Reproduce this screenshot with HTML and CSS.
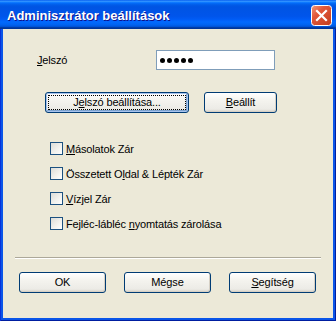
FILE: index.html
```html
<!doctype html>
<html>
<head>
	<title>Adminisztrátor beállítások</title>
	<meta charset="utf-8">
	<link rel="stylesheet" href="styles.css">
</head>

<body>
	<div class="window">
		<div class="titlebar">
			<span class="title">Adminisztrátor beállítások</span>
			<span class="close">
				<svg width="21" height="21" viewBox="0 0 21 21">
					<defs>
						<linearGradient id="cg" x1="0" y1="0" x2="1" y2="1">
							<stop offset="0" stop-color="#F09A7E"/>
							<stop offset="0.35" stop-color="#E2583A"/>
							<stop offset="1" stop-color="#C23D1E"/>
						</linearGradient>
					</defs>
					<rect x="0.5" y="0.5" width="20" height="20" rx="3" fill="url(#cg)" stroke="#fff"/>
					<path d="M6 6 L15 15 M15 6 L6 15" stroke="#fff" stroke-width="2.2" stroke-linecap="square"/>
				</svg>
			</span>
		</div>

		<div class="client">
			<div class="pw-row">
				<span class="pw-label"><u>J</u>elszó</span>
				<div class="pw-field">
					<i class="dot"></i><i class="dot"></i><i class="dot"></i><i class="dot"></i><i class="dot"></i>
				</div>
			</div>

			<div class="btn-row">
				<div class="btn btn-focus btn-wide">J<u>e</u>lszó beállítása...</div>
				<div class="btn btn-small"><u>B</u>eállít</div>
			</div>

			<div class="checks">
				<div class="check"><span class="box"></span><span><u>M</u>ásolatok Zár</span></div>
				<div class="check"><span class="box"></span><span>Összetett O<u>l</u>dal &amp; Lépték Zár</span></div>
				<div class="check"><span class="box"></span><span><u>V</u>ízjel Zár</span></div>
				<div class="check"><span class="box"></span><span>Fejléc-lábléc <u>n</u>yomtatás zárolása</span></div>
			</div>

			<div class="sep"></div>

			<div class="footer">
				<div class="btn">OK</div>
				<div class="btn">Mégse</div>
				<div class="btn"><u>S</u>egítség</div>
			</div>
		</div>
	</div>
</body>
</html>
```

FILE: styles.css
```css
body {
	margin: 0;
	padding: 0;
	font-family: "Liberation Sans", Arial, sans-serif;
	font-size: 11px;
	letter-spacing: -0.15px;
	color: #000;
}
u {
	text-decoration: underline;
	text-underline-offset: 1px;
}

.window {
	width: 336px;
	height: 321px;
	box-sizing: border-box;
	padding: 0 3px 3px;
	background: #0A55E8;
	box-shadow: inset 1px 0 #0831D9, inset -1px 0 #001EA0, inset 0 -1px #001EA0;
	display: flex;
	flex-direction: column;
}

.titlebar {
	height: 29px;
	margin: 0 -3px;
	padding: 0 4px 0 7px;
	display: flex;
	align-items: center;
	justify-content: space-between;
	background: linear-gradient(to bottom, #0058ee 0%, #3593ff 4%, #288eff 6%, #127dff 8%, #036ffc 10%, #0262ee 14%, #0057e5 20%, #0054e3 24%, #0055eb 56%, #005bf5 66%, #026afe 76%, #0062ef 86%, #0052d6 92%, #0040ab 94%, #003092 100%);
}
.title {
	color: #fff;
	font-size: 13px;
	font-weight: bold;
	letter-spacing: 0;
	text-shadow: 1px 1px #0F1089;
	padding-top: 1px;
}
.close {
	display: block;
	width: 21px;
	height: 21px;
	margin-top: 2px;
}
.close svg {
	display: block;
}

.client {
	flex: 1;
	background: #ECE9D8;
	display: flex;
	flex-direction: column;
}

.pw-row {
	display: flex;
	align-items: center;
	margin-top: 21px;
	padding-left: 34px;
}
.pw-label {
	width: 119px;
}
.pw-field {
	width: 119px;
	height: 20px;
	box-sizing: border-box;
	border: 1px solid #7F9DB9;
	background: #fff;
	display: flex;
	align-items: center;
	padding-left: 3px;
	padding-top: 1px;
}
.dot {
	display: block;
	width: 5px;
	height: 5px;
	border-radius: 50%;
	background: #000;
	margin-right: 2px;
}

.btn-row {
	display: flex;
	gap: 15px;
	margin-top: 22px;
	padding-left: 42px;
}

.btn {
	position: relative;
	width: 87px;
	height: 21px;
	box-sizing: border-box;
	border: 1px solid #003C74;
	border-radius: 3px;
	background: linear-gradient(to bottom, #fff 0%, #F4F3EE 40%, #ECEBE6 85%, #D6D0C5 100%);
	box-shadow: inset -1px -1px #D6D0C5;
	display: flex;
	align-items: center;
	justify-content: center;
	padding-bottom: 1px;
}
.btn-wide {
	width: 144px;
}
.btn-small {
	width: 73px;
}
.btn-focus {
	box-shadow: inset 0 0 0 1px #A8C4EE, inset -1px -1px 0 1px #7DA2CE;
}
.btn-focus::after {
	content: '';
	position: absolute;
	left: 2px;
	top: 2px;
	right: 2px;
	bottom: 2px;
	border: 1px dotted #000;
}

.checks {
	display: flex;
	flex-direction: column;
	gap: 12px;
	margin-top: 29px;
	padding-left: 47px;
}
.check {
	display: flex;
	align-items: center;
	gap: 3px;
	height: 13px;
}
.box {
	width: 13px;
	height: 13px;
	box-sizing: border-box;
	border: 1px solid #1C5180;
	background: linear-gradient(135deg, #DCDCD7 0%, #F3F3EF 60%, #fff 100%);
}

.sep {
	margin: 27px 12px 0 12px;
	height: 0;
	border-top: 1px solid #ACA899;
	border-bottom: 1px solid #fff;
}

.footer {
	display: flex;
	gap: 18px;
	margin-top: 13px;
	padding-left: 16px;
}
```
